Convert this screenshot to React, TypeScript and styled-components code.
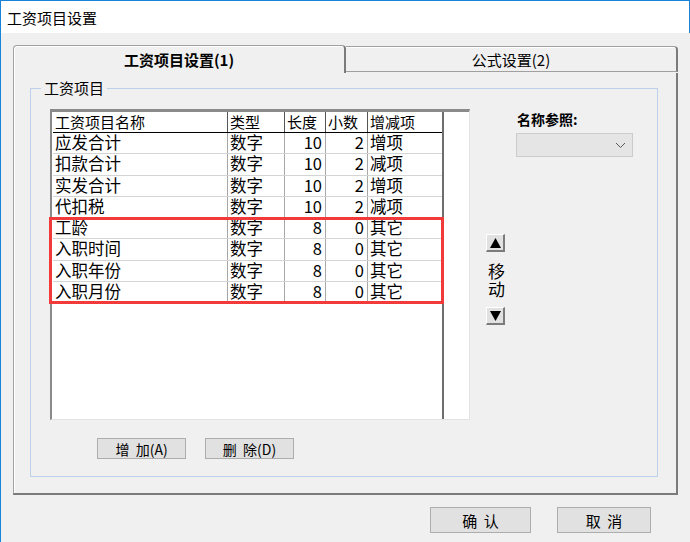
import React from "react";
import styled, { createGlobalStyle } from "styled-components";

const FONT = `"Noto Sans CJK SC", "Noto Sans", sans-serif`;

const GlobalStyle = createGlobalStyle`
  html, body {
    margin: 0;
    padding: 0;
    background: #f0f0f0;
  }
  body {
    font-family: ${FONT};
    color: #000;
  }
`;

const Window = styled.div`
  width: 690px;
  height: 542px;
  display: flex;
  flex-direction: column;
  overflow: hidden;
`;

const TitleBar = styled.div`
  height: 33px;
  box-sizing: border-box;
  background: #fff;
  border: 1px solid #1883d7;
  border-bottom: none;
  display: flex;
  align-items: center;
  padding-left: 6px;
  font-size: 15px;
  line-height: 1;
`;

const Body = styled.div`
  flex: 1;
  border-left: 1px solid #1883d7;
  padding: 12px 0 0 12px;
  display: flex;
  flex-direction: column;
`;

const TabStrip = styled.div`
  display: flex;
  align-items: flex-start;
  height: 28px;
`;

const Tab = styled.div<{ $active?: boolean }>`
  box-sizing: border-box;
  display: flex;
  align-items: center;
  justify-content: center;
  background: #f0f0f0;
  font-size: 15px;
  width: ${({ $active }) => ($active ? 333 : 332)}px;
  height: ${({ $active }) => ($active ? 28 : 26)}px;
  margin-top: ${({ $active }) => ($active ? 0 : 1)}px;
  font-weight: ${({ $active }) => ($active ? "bold" : "normal")};
  border-top: 1px solid #a0a0a0;
  border-right: 2px solid #7b7b7b;
  border-left: ${({ $active }) => ($active ? "1px solid #a0a0a0" : "none")};
  border-bottom: ${({ $active }) => ($active ? "none" : "1px solid #a0a0a0")};
  border-radius: ${({ $active }) => ($active ? "4px 4px 0 0" : "0 4px 0 0")};
  box-shadow: ${({ $active }) =>
    $active ? "inset 1px 1px 0 #fff" : "inset 0 1px 0 #fff"};
`;

const Panel = styled.div`
  width: 665px;
  height: 422px;
  box-sizing: border-box;
  border-left: 1px solid #a0a0a0;
  border-right: 2px solid #7b7b7b;
  border-bottom: 2px solid #7b7b7b;
  box-shadow: inset 1px 0 0 #fff;
  padding: 15px 0 0 16px;
`;

const Group = styled.div`
  position: relative;
  width: 628px;
  height: 389px;
  box-sizing: border-box;
  border: 1px solid #bcd0ea;
  padding: 20px 0 0 19px;
  display: flex;
`;

const Caption = styled.span`
  position: absolute;
  top: -11px;
  left: 10px;
  padding: 0 3px;
  background: #f0f0f0;
  font-size: 15px;
  line-height: 20px;
`;

const LeftPane = styled.div`
  display: flex;
  flex-direction: column;
`;

const TableBox = styled.div`
  position: relative;
  width: 420px;
  height: 311px;
  box-sizing: border-box;
  background: #fff;
  border-top: 3px solid #8a8a8a;
  border-left: 2px solid #8a8a8a;
  border-right: 1px solid #e3e3e3;
  border-bottom: 1px solid #e3e3e3;
  padding-left: 1px;
  display: flex;
`;

const Columns = styled.div`
  width: 391px;
  box-sizing: border-box;
  border-right: 2px solid #6e6e6e;
  display: flex;
  flex-direction: column;
`;

const COLS = "175px 57px 41px 42px 74px";
const ROW_H = 21.25;
const HEAD_H = 21;

const Row = styled.div<{ $head?: boolean }>`
  display: grid;
  grid-template-columns: ${COLS};
  box-sizing: border-box;
  height: ${({ $head }) => ($head ? HEAD_H : ROW_H)}px;
  border-bottom: 1px solid ${({ $head }) => ($head ? "#000" : "#d4d4d4")};
  font-size: ${({ $head }) => ($head ? 15 : 16.5)}px;
`;

const Cell = styled.div<{ $num?: boolean; $head?: boolean; $last?: boolean }>`
  box-sizing: border-box;
  white-space: nowrap;
  text-align: ${({ $num }) => ($num ? "right" : "left")};
  padding: ${({ $num }) => ($num ? "0 3px 0 0" : "0 0 0 2px")};
  border-right: ${({ $last, $head }) =>
    $last ? "none" : `1px solid ${$head ? "#555" : "#a8a8a8"}`};
  line-height: 19px;
`;

const Highlight = styled.div<{ $top: number; $height: number }>`
  position: absolute;
  left: -3px;
  top: ${({ $top }) => $top}px;
  width: 395px;
  height: ${({ $height }) => $height}px;
  box-sizing: border-box;
  border: 3px solid #f23a3a;
  pointer-events: none;
`;

const ButtonRow = styled.div`
  display: flex;
  gap: 19px;
  margin-top: 18px;
  padding-left: 47px;
`;

const Button = styled.button<{ $w: number; $h: number; $size?: number }>`
  width: ${({ $w }) => $w}px;
  height: ${({ $h }) => $h}px;
  box-sizing: border-box;
  background: #e1e1e1;
  border: 1px solid #adadad;
  font-family: ${FONT};
  font-size: ${({ $size }) => $size ?? 14}px;
  color: #000;
  padding: 0;
  line-height: 1;
  white-space: pre;
`;

const RightPane = styled.div`
  margin-left: 16px;
  display: flex;
  flex-direction: column;
  align-items: flex-start;
`;

const FieldLabel = styled.div`
  margin: 2px 0 0 31px;
  font-size: 14px;
  font-weight: bold;
  line-height: 16px;
`;

const Combo = styled.div`
  margin: 6px 0 0 30px;
  width: 117px;
  height: 24px;
  box-sizing: border-box;
  background: #e5e5e5;
  border: 1px solid #cccccc;
  display: flex;
  align-items: center;
  justify-content: flex-end;
  padding-right: 6px;
`;

const MoveBox = styled.div`
  margin-top: 77px;
  display: flex;
  flex-direction: column;
  align-items: flex-start;
`;

const ArrowButton = styled.div`
  width: 19px;
  height: 18px;
  box-sizing: border-box;
  background: #e1e1e1;
  border-top: 1px solid #fff;
  border-left: 1px solid #fff;
  border-right: 2px solid #7b7b7b;
  border-bottom: 2px solid #7b7b7b;
  display: flex;
  align-items: center;
  justify-content: center;
`;

const MoveText = styled.div`
  margin: 10px 0 9px 2px;
  font-size: 17px;
  line-height: 18px;
  width: 18px;
`;

const Footer = styled.div`
  display: flex;
  justify-content: flex-end;
  gap: 26px;
  margin-top: 12px;
  padding-right: 39px;
`;

type Item = {
  name: string;
  type: string;
  len: number;
  dec: number;
  kind: string;
};

const items: Item[] = [
  { name: "应发合计", type: "数字", len: 10, dec: 2, kind: "增项" },
  { name: "扣款合计", type: "数字", len: 10, dec: 2, kind: "减项" },
  { name: "实发合计", type: "数字", len: 10, dec: 2, kind: "增项" },
  { name: "代扣税", type: "数字", len: 10, dec: 2, kind: "减项" },
  { name: "工龄", type: "数字", len: 8, dec: 0, kind: "其它" },
  { name: "入职时间", type: "数字", len: 8, dec: 0, kind: "其它" },
  { name: "入职年份", type: "数字", len: 8, dec: 0, kind: "其它" },
  { name: "入职月份", type: "数字", len: 8, dec: 0, kind: "其它" },
];

// rows 4..7 are boxed in red
const markFrom = 4;
const markCount = 4;

const App = () => {
  const markTop = HEAD_H + markFrom * ROW_H - 1;
  const markHeight = markCount * ROW_H + 2;
  return (
    <Window>
      <GlobalStyle />
      <TitleBar>工资项目设置</TitleBar>
      <Body>
        <TabStrip>
          <Tab $active>工资项目设置(1)</Tab>
          <Tab>公式设置(2)</Tab>
        </TabStrip>
        <Panel>
          <Group>
            <Caption>工资项目</Caption>
            <LeftPane>
              <TableBox>
                <Columns>
                  <Row $head>
                    <Cell $head>工资项目名称</Cell>
                    <Cell $head>类型</Cell>
                    <Cell $head>长度</Cell>
                    <Cell $head>小数</Cell>
                    <Cell $head $last>
                      增减项
                    </Cell>
                  </Row>
                  {items.map((it) => (
                    <Row key={it.name}>
                      <Cell>{it.name}</Cell>
                      <Cell>{it.type}</Cell>
                      <Cell $num>{it.len}</Cell>
                      <Cell $num>{it.dec}</Cell>
                      <Cell $last>{it.kind}</Cell>
                    </Row>
                  ))}
                </Columns>
                <Highlight $top={markTop} $height={markHeight} />
              </TableBox>
              <ButtonRow>
                <Button $w={89} $h={21}>
                  {"增  加(A)"}
                </Button>
                <Button $w={89} $h={21}>
                  {"删  除(D)"}
                </Button>
              </ButtonRow>
            </LeftPane>
            <RightPane>
              <FieldLabel>名称参照:</FieldLabel>
              <Combo>
                <svg width="11" height="7" viewBox="0 0 11 7">
                  <path d="M1 1 L5.5 5.5 L10 1" fill="none" stroke="#5a5a5a" strokeWidth="1" />
                </svg>
              </Combo>
              <MoveBox>
                <ArrowButton>
                  <svg width="11" height="10" viewBox="0 0 11 10">
                    <polygon points="5.5,0 11,10 0,10" fill="#000" />
                  </svg>
                </ArrowButton>
                <MoveText>移动</MoveText>
                <ArrowButton>
                  <svg width="11" height="10" viewBox="0 0 11 10">
                    <polygon points="0,0 11,0 5.5,10" fill="#000" />
                  </svg>
                </ArrowButton>
              </MoveBox>
            </RightPane>
          </Group>
        </Panel>
        <Footer>
          <Button $w={101} $h={26} $size={15}>
            {"确  认"}
          </Button>
          <Button $w={94} $h={26} $size={15}>
            {"取  消"}
          </Button>
        </Footer>
      </Body>
    </Window>
  );
};

export default App;
